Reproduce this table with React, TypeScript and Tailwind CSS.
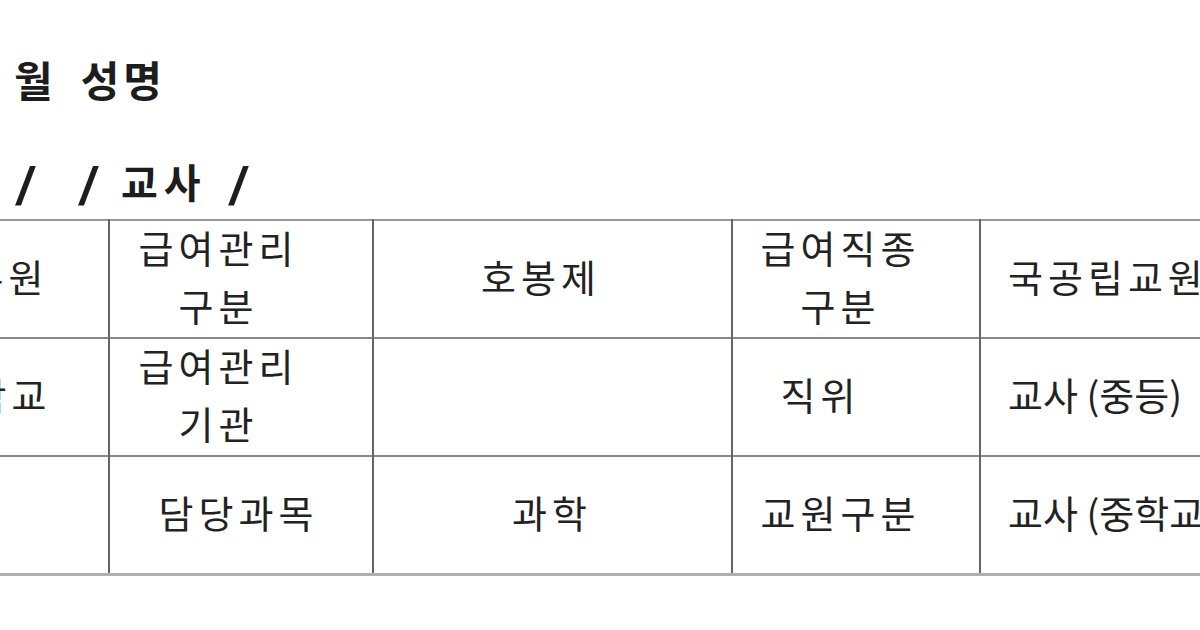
const FONT = "font-['Noto_Sans_CJK_KR','Noto_Sans',sans-serif]";

const Cell = ({
  children,
  className = "",
  track = "tracking-[5px]",
}: {
  children?: React.ReactNode;
  className?: string;
  track?: string;
}) => (
  <td
    className={`border-l-2 border-[#666] h-[118px] p-0 align-middle text-[38px] leading-[58px] text-[#222] ${track} ${className}`}
  >
    <div className="-mt-[6px]">{children}</div>
  </td>
);

export default function App() {
  return (
    <div className={`w-[1200px] h-[630px] bg-white overflow-hidden ${FONT}`}>
      {/* title lines */}
      <div className="pt-[52px] pl-[14px] text-[42px] font-bold tracking-[4px] text-[#1d1d1d] leading-[54px] flex">
        <span>월</span>
        <span className="ml-[24px]">성명</span>
      </div>
      <div className="mt-[48px] pl-[18px] text-[40px] font-bold text-[#1d1d1d] leading-[54px] flex">
        <span className="scale-x-150">/</span>
        <span className="ml-[48px] scale-x-150">/</span>
        <span className="ml-[24px] tracking-[6px]">교사</span>
        <span className="ml-[24px] scale-x-150">/</span>
      </div>

      {/* table, cropped on both sides */}
      <div className="mt-[11px] ml-[-213px] w-[1600px]">
        <table className="table-fixed border-collapse border-t-2 border-b-[3px] border-t-[#999] border-b-[#b0b0b0]">
          <colgroup>
            <col className="w-[322px]" />
            <col className="w-[264px]" />
            <col className="w-[359px]" />
            <col className="w-[248px]" />
            <col className="w-[400px]" />
          </colgroup>
          <tbody>
            <tr className="border-b-2 border-[#888]">
              <td className="p-0 h-[118px] text-center text-[38px] tracking-[5px] leading-[58px] text-[#222] pl-[2px]">
                <div className="-mt-[6px]">교육공무원</div>
              </td>
              <Cell className="text-center pr-[45px]">
                급여관리
                <br />
                구분
              </Cell>
              <Cell className="text-center pr-[23px]">호봉제</Cell>
              <Cell className="text-center pr-[31px]">
                급여직종
                <br />
                구분
              </Cell>
              <Cell className="pl-[27px] whitespace-nowrap">국공립교원</Cell>
            </tr>
            <tr className="border-b-2 border-[#888]">
              <td className="p-0 h-[118px] text-center text-[38px] tracking-[5px] leading-[58px] text-[#222] pl-[8px]">
                <div className="-mt-[6px]">서울중학교</div>
              </td>
              <Cell className="text-center pr-[45px]">
                급여관리
                <br />
                기관
              </Cell>
              <Cell />
              <Cell className="text-center pr-[71px]">직위</Cell>
              <Cell className="pl-[27px] whitespace-nowrap" track="tracking-[0px]">
                교사 (중등)
              </Cell>
            </tr>
            <tr>
              <td className="p-0 h-[118px]" />
              <Cell className="text-center pr-[5px]">담당과목</Cell>
              <Cell className="text-center pr-[1px]">과학</Cell>
              <Cell className="text-center pr-[31px]">교원구분</Cell>
              <Cell className="pl-[27px] whitespace-nowrap" track="tracking-[0px]">
                교사 (중학교)
              </Cell>
            </tr>
          </tbody>
        </table>
      </div>
    </div>
  );
}
